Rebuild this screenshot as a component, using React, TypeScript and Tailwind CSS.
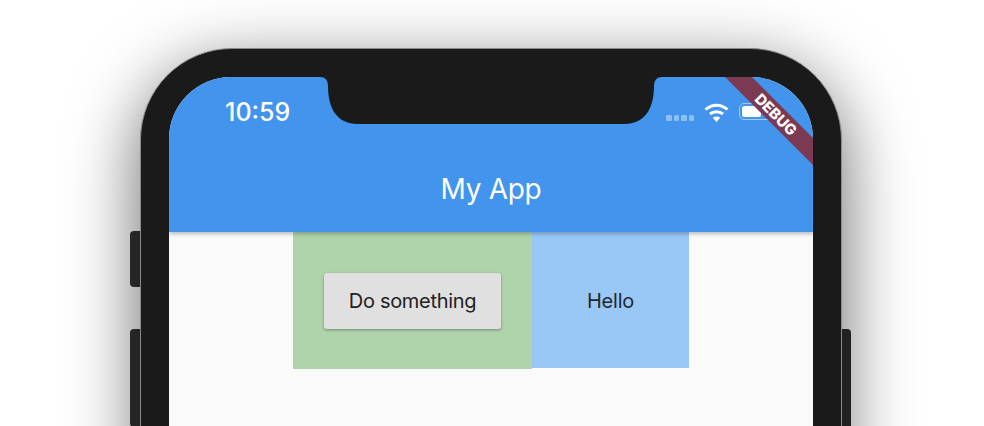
export default function App() {
  return (
    <div className="relative h-[426px] w-[984px] overflow-hidden bg-white pl-[140px] pt-[48px] font-['Inter',sans-serif]">
      <div className="relative h-[500px] w-[702px]">
        {/* side buttons */}
        <div className="absolute left-[-10px] top-[183px] h-[56px] w-[12px] rounded-l-[4px] bg-[#333333]" />
        <div className="absolute left-[-10px] top-[281px] h-[98px] w-[12px] rounded-l-[4px] bg-[#333333]" />
        <div className="absolute right-[-9px] top-[281px] h-[130px] w-[12px] rounded-r-[4px] bg-[#2e2e2e]" />
        {/* body */}
        <div className="relative h-full w-full rounded-[92px] border border-[#8a8a8a] bg-[#1a1a1a] p-[28px] shadow-[0_20px_70px_rgba(0,0,0,0.6)]">
          <div className="relative h-full w-[644px] overflow-hidden rounded-[62px] bg-[#fafafa]">
            <header className="relative z-10 flex h-[155px] flex-col bg-[#4394ec] shadow-[0_2px_4px_rgba(0,0,0,0.25)]">
              <div className="flex h-[70px] items-center justify-between pl-[56px] pr-[40px]">
                <span className="text-[25px] font-medium leading-[30px] text-white">10:59</span>
                <div className="flex items-center gap-[10px]">
                  <div className="mt-[12px] flex gap-[2px] opacity-40">
                    <i className="h-[6px] w-[5.5px] rounded-[1.5px] bg-white" />
                    <i className="h-[6px] w-[5.5px] rounded-[1.5px] bg-white" />
                    <i className="h-[6px] w-[5.5px] rounded-[1.5px] bg-white" />
                    <i className="h-[6px] w-[5.5px] rounded-[1.5px] bg-white" />
                  </div>
                  <svg width="25" height="19" viewBox="0 0 25 19" fill="none">
                    <path d="M1.5 6.5C8 0.7 17 0.7 23.5 6.5" stroke="#fff" strokeWidth="3" />
                    <path d="M6 11C9.5 8 15.5 8 19 11" stroke="#fff" strokeWidth="3" />
                    <path d="M12.5 19L8.8 14.8C11 13.2 14 13.2 16.2 14.8Z" fill="#fff" />
                  </svg>
                  <div className="mb-[1px] flex h-[17px] w-[34px] items-center rounded-[5px] border border-white/50 p-[2px]">
                    <div className="h-full w-[19px] rounded-[2.5px] bg-white" />
                  </div>
                </div>
              </div>
              <h1 className="mt-[24px] text-center text-[28px] font-normal leading-[36px] tracking-[-0.3px] text-white">My App</h1>
            </header>
            <main className="flex justify-center">
              <div className="flex items-start">
                <div className="flex h-[137px] w-[239px] items-center justify-center bg-[#afd3ab]">
                  <button className="mt-[1px] h-[56px] w-[177px] rounded-[3px] bg-[#e0e0e0] text-[20px] tracking-[-0.3px] text-[#222222] shadow-[0_1px_3px_rgba(0,0,0,0.35)]">
                    Do something
                  </button>
                </div>
                <div className="flex h-[136px] w-[157px] items-center justify-center bg-[#9ac8f6] pt-[2px] text-[20px] tracking-[-0.2px] text-[#222831]">
                  Hello
                </div>
              </div>
            </main>
            {/* debug ribbon */}
            <div className="absolute right-[-38px] top-[27.5px] z-20 flex h-[19px] w-[150px] rotate-45 items-center justify-center bg-[#7b3a52] text-[15px] font-extrabold leading-none text-white">
              DEBUG
            </div>
          </div>
          {/* notch */}
          <svg width="342" height="47" viewBox="0 0 342 47" className="absolute left-[179px] top-[28px] z-30">
            <path d="M0 0Q8 0 8 9C8 30 16 47 38 47H304C326 47 334 30 334 9Q334 0 342 0Z" fill="#1a1a1a" />
          </svg>
        </div>
      </div>
    </div>
  );
}
